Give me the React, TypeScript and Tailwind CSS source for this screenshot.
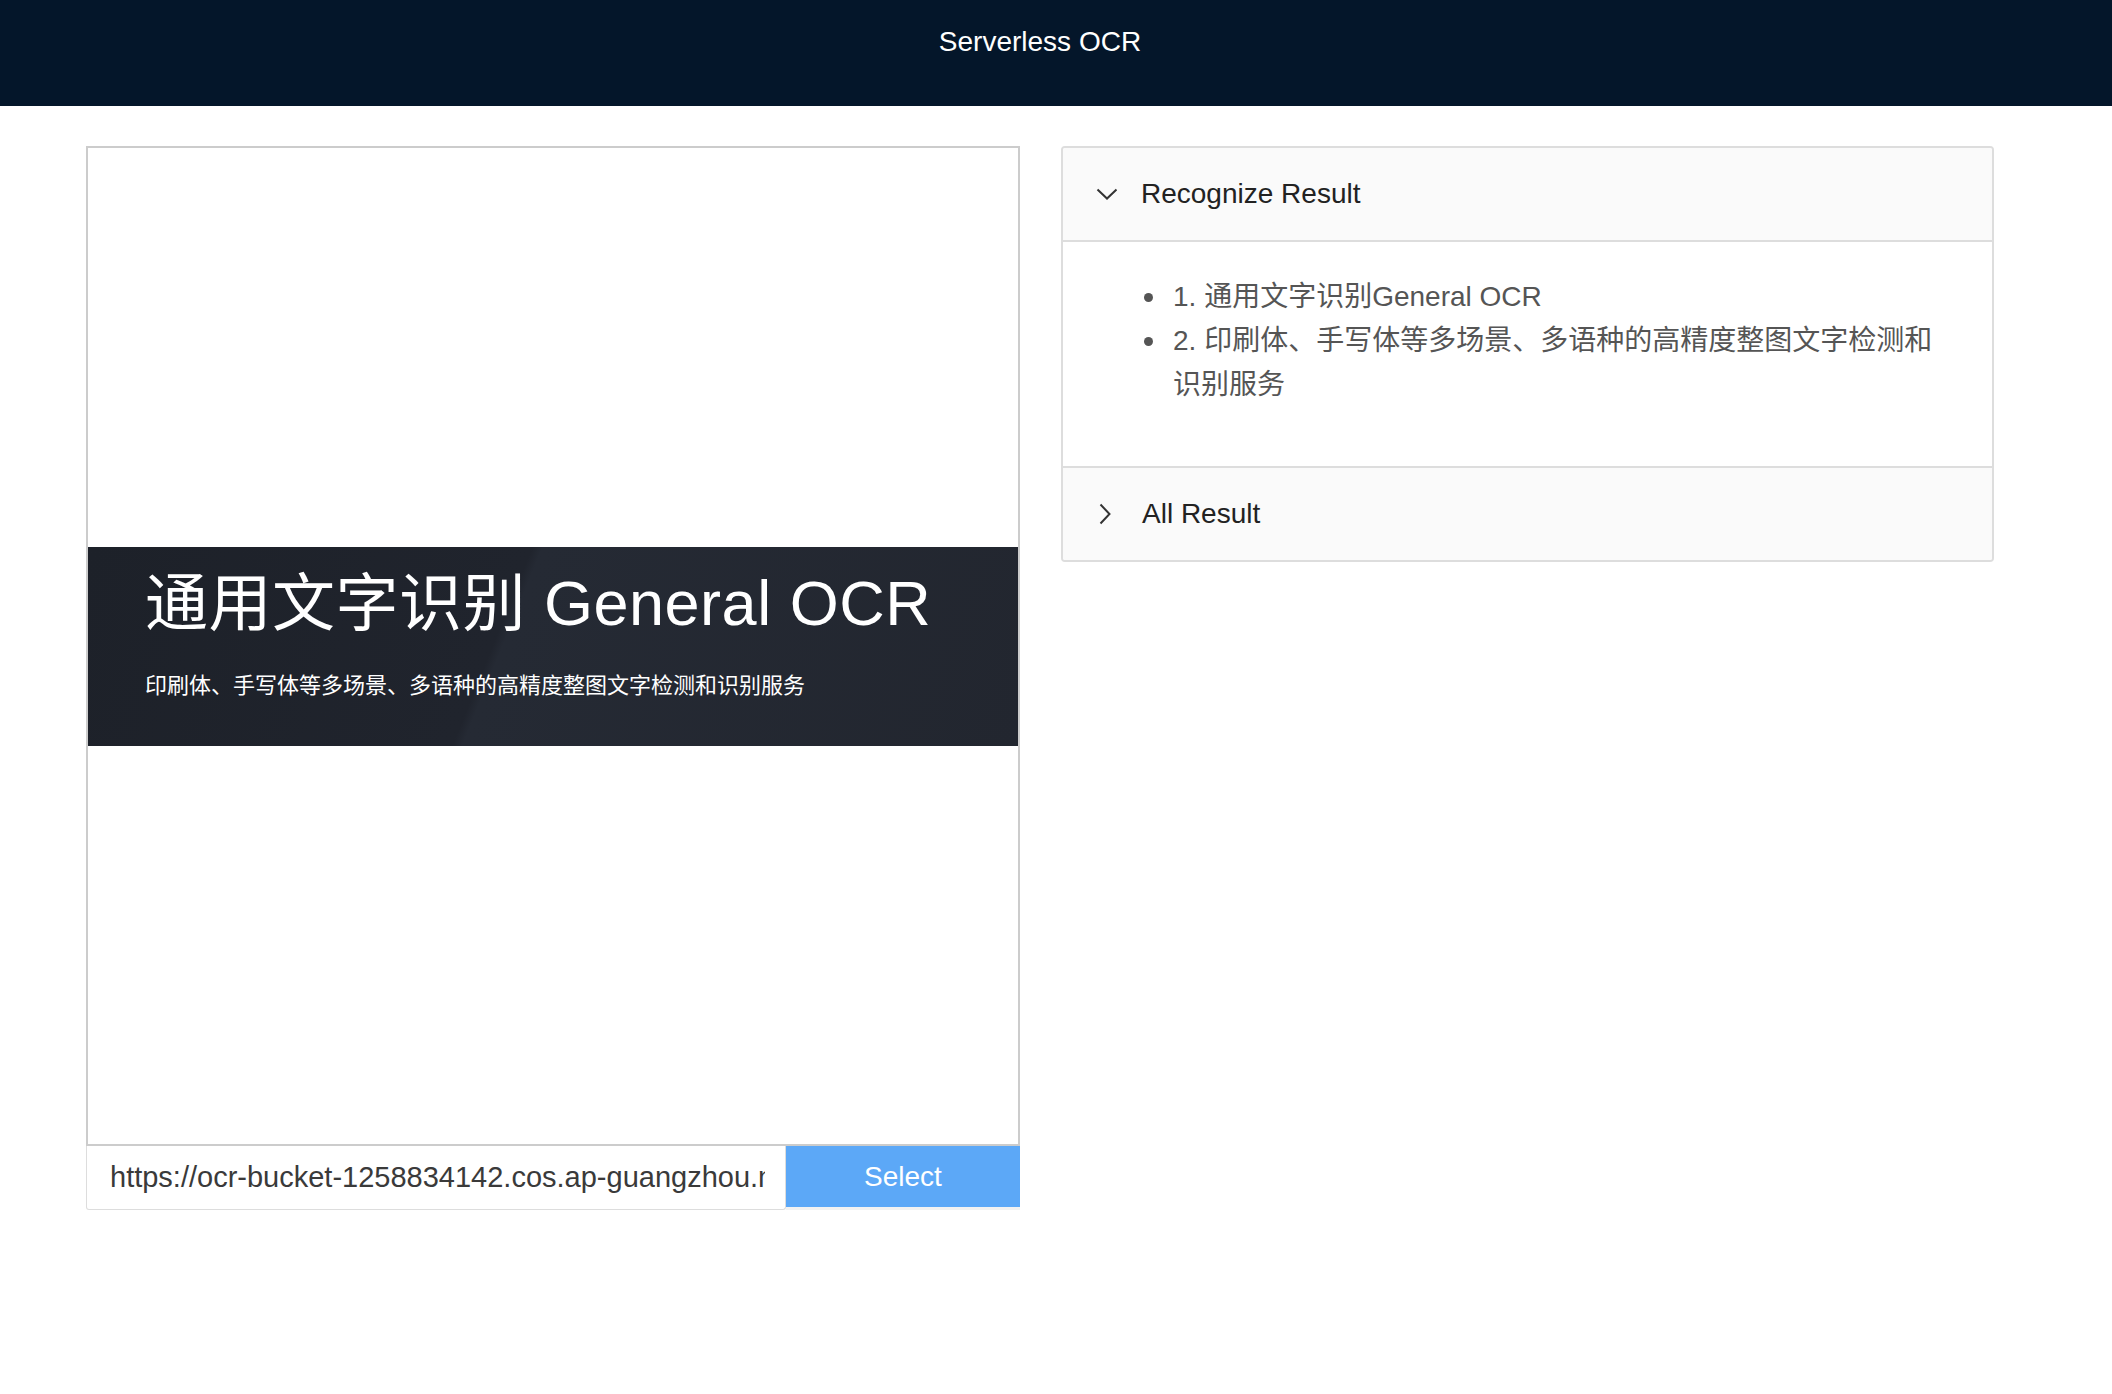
import React from 'react'

const font = { fontFamily: '"Liberation Sans", "Noto Sans CJK SC", sans-serif' }

function ChevronDown() {
  return (
    <svg width="22" height="12" viewBox="0 0 22 12" fill="none">
      <path d="M1.5 1.5 L11 10.5 L20.5 1.5" stroke="#333" strokeWidth="2" />
    </svg>
  )
}

function ChevronRight() {
  return (
    <svg width="12" height="22" viewBox="0 0 12 22" fill="none">
      <path d="M1.5 1.5 L10.5 11 L1.5 20.5" stroke="#333" strokeWidth="2" />
    </svg>
  )
}

const results = ['1. 通用文字识别General OCR', '2. 印刷体、手写体等多场景、多语种的高精度整图文字检测和识别服务']

export default function App() {
  const url = 'https://ocr-bucket-1258834142.cos.ap-guangzhou.myqcloud.com/ocr-demo.png'
  return (
    <div className="min-h-[1394px] bg-white" style={font}>
      <header className="h-[106px] bg-[#04162a] text-white text-[28px] leading-[32px] text-center pt-[26px] pr-[32px]">
        Serverless OCR
      </header>

      <main className="flex gap-[41px] pl-[86px] pt-[40px]">
        {/* left: preview + url */}
        <div className="w-[934px] flex flex-col">
          <div className="h-[1000px] border-2 border-[#cccccc] bg-white flex items-center">
            <div className="w-full h-[199px] pl-[57px] pt-[20px] bg-[linear-gradient(112deg,#1d2129_0%,#20242d_44%,#252a34_45%,#22262f_100%)] text-white">
              <div className="text-[63px] leading-[72px] tracking-[0.5px]">通用文字识别 General OCR</div>
              <div className="mt-[32px] text-[22px] leading-[30px]">印刷体、手写体等多场景、多语种的高精度整图文字检测和识别服务</div>
            </div>
          </div>
          <div className="flex h-[64px]">
            <div className="flex-1 min-w-0 border border-[#dddddd] border-t-0 rounded-b-[3px] flex items-center pl-[23px] pr-[20px] overflow-hidden">
              <input
                readOnly
                value={url}
                className="w-full outline-none bg-transparent text-[29px] text-[#3a3a3a]"
                style={font}
              />
            </div>
            <button className="w-[234px] h-[64px] bg-[#5ca8f7] text-white text-[28px] border-b-[3px] border-[#f2f2f2]" style={font}>
              Select
            </button>
          </div>
        </div>

        {/* right: results accordion */}
        <div className="w-[933px] self-start border-2 border-[#dddddd] rounded-[4px] overflow-hidden">
          <div className="h-[94px] bg-[#fafafa] border-b-2 border-[#dddddd] flex items-center pl-[33px]">
            <ChevronDown />
            <span className="ml-[23px] text-[28px] text-[#222222]">Recognize Result</span>
          </div>
          <div className="h-[226px] border-b-2 border-[#dddddd] bg-white pt-[33px] pl-[81px] pr-[44px]">
            <ul className="text-[28px] leading-[44px] text-[#555555]">
              {results.map((r) => (
                <li key={r} className="flex">
                  <span className="shrink-0 w-[9px] h-[9px] rounded-full bg-[#555555] mt-[18px] mr-[20px]" />
                  <span>{r}</span>
                </li>
              ))}
            </ul>
          </div>
          <div className="h-[92px] bg-[#fafafa] flex items-center pl-[36px]">
            <ChevronRight />
            <span className="ml-[31px] text-[28px] text-[#222222]">All Result</span>
          </div>
        </div>
      </main>
    </div>
  )
}
